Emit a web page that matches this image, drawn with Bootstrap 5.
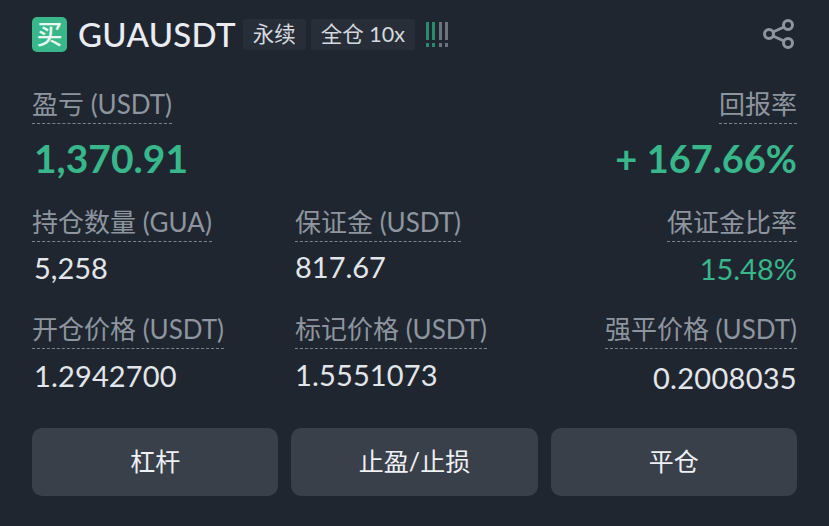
<!DOCTYPE html>
<html lang="zh"><head><meta charset="utf-8"><title>GUAUSDT</title>
<link href="https://cdn.jsdelivr.net/npm/bootstrap@5.3.0/dist/css/bootstrap.min.css" rel="stylesheet">
<style>
html,body{height:100%}
body{background:#1f2630;color:#e9edf2;font-family:Lato,"Noto Sans CJK SC",sans-serif;overflow:hidden}
.pos-wrap{width:829px;height:526px;padding:16px 32px 0 32px}
.hdr{height:36px}
.buy-tag{width:35px;height:35px;background:#37b78a;border-radius:5px;color:#e8f7f1;font-size:26px;font-weight:500;line-height:35px;text-align:center}
.sym{font-size:33px;line-height:36px;font-weight:500;color:#e9edf2;margin-left:11px;margin-right:7px;letter-spacing:.3px}
.chip{background:#272e38;color:#d5d9df;font-size:21.5px;line-height:30px;height:31px;padding:0 10px;border-radius:3px;margin-right:5px}
.sig{margin-left:6px;display:flex;gap:3.4px;height:25px;align-items:stretch}
.sig i{width:3px;display:block;background:linear-gradient(#2c8a6c 0 72%,transparent 72% 84%,#2c8a6c 84%)}
.sig i:nth-child(n+3){background:linear-gradient(#6c737c 0 72%,transparent 72% 84%,#6c737c 84%)}
.share{margin-right:3px}
.lbl{display:inline-block;color:#8e959e;font-size:26px;line-height:32px;height:36px;border-bottom:1px dashed #7c838c}
.main-row{margin-top:36px}
.pnl{font-size:39px;font-weight:700;line-height:44px;color:#37b78a;margin-top:12px;padding-left:2px}
.pnl-r{font-size:38px}
.grid3{display:grid;grid-template-columns:263px 1fr auto}
.val{font-size:29px;line-height:34px;color:#e2e6eb;padding-left:2px;margin-top:9px}
.val-m{padding-left:0;margin-top:8px}
.val-r{padding-left:0;text-align:right;margin-top:10px}
.grn{color:#37b78a}
.r2{margin-top:26px}
.r3{margin-top:27px}
.r3 .val{margin-top:10px;letter-spacing:.15px}
.r3 .val-m{margin-top:9px}
.r3 .val-r{margin-top:12px;letter-spacing:.3px}
.act{margin-top:33px;display:grid;grid-template-columns:repeat(3,1fr);gap:13px}
.act-btn{background:#3a404a;border:0;color:#eef1f5;height:68px;border-radius:10px;font-size:25px;padding:0}
.act-btn:hover{background:#3a404a;color:#eef1f5}
</style></head><body>
<div class="pos-wrap">
<div class="hdr d-flex align-items-center">
<div class="buy-tag">买</div>
<div class="sym">GUAUSDT</div>
<div class="chip">永续</div>
<div class="chip">全仓 10x</div>
<div class="sig"><i></i><i></i><i></i><i></i></div>
<svg class="ms-auto share" width="32" height="32" viewBox="0 0 32 32" fill="none" stroke="#8e959e" stroke-width="3"><circle cx="7" cy="16" r="4.5"/><circle cx="26" cy="7" r="4.5"/><circle cx="26" cy="25" r="4.5"/><path d="M11 14 22 9M11 18l11 5"/></svg>
</div>
<div class="d-flex justify-content-between main-row">
<div><div class="lbl">盈亏 (USDT)</div><div class="pnl">1,370.91</div></div>
<div class="text-end"><div class="lbl">回报率</div><div class="pnl pnl-r grn">+ 167.66%</div></div>
</div>
<div class="grid3 r2">
<div><div class="lbl">持仓数量 (GUA)</div><div class="val">5,258</div></div>
<div><div class="lbl">保证金 (USDT)</div><div class="val val-m">817.67</div></div>
<div class="text-end"><div class="lbl">保证金比率</div><div class="val val-r grn">15.48%</div></div>
</div>
<div class="grid3 r3">
<div><div class="lbl">开仓价格 (USDT)</div><div class="val">1.2942700</div></div>
<div><div class="lbl">标记价格 (USDT)</div><div class="val val-m">1.5551073</div></div>
<div class="text-end"><div class="lbl">强平价格 (USDT)</div><div class="val val-r">0.2008035</div></div>
</div>
<div class="act">
<button class="btn act-btn">杠杆</button>
<button class="btn act-btn">止盈/止损</button>
<button class="btn act-btn">平仓</button>
</div>
</div>
<script src="https://cdn.jsdelivr.net/npm/bootstrap@5.3.0/dist/js/bootstrap.bundle.min.js"></script>
</body></html>
